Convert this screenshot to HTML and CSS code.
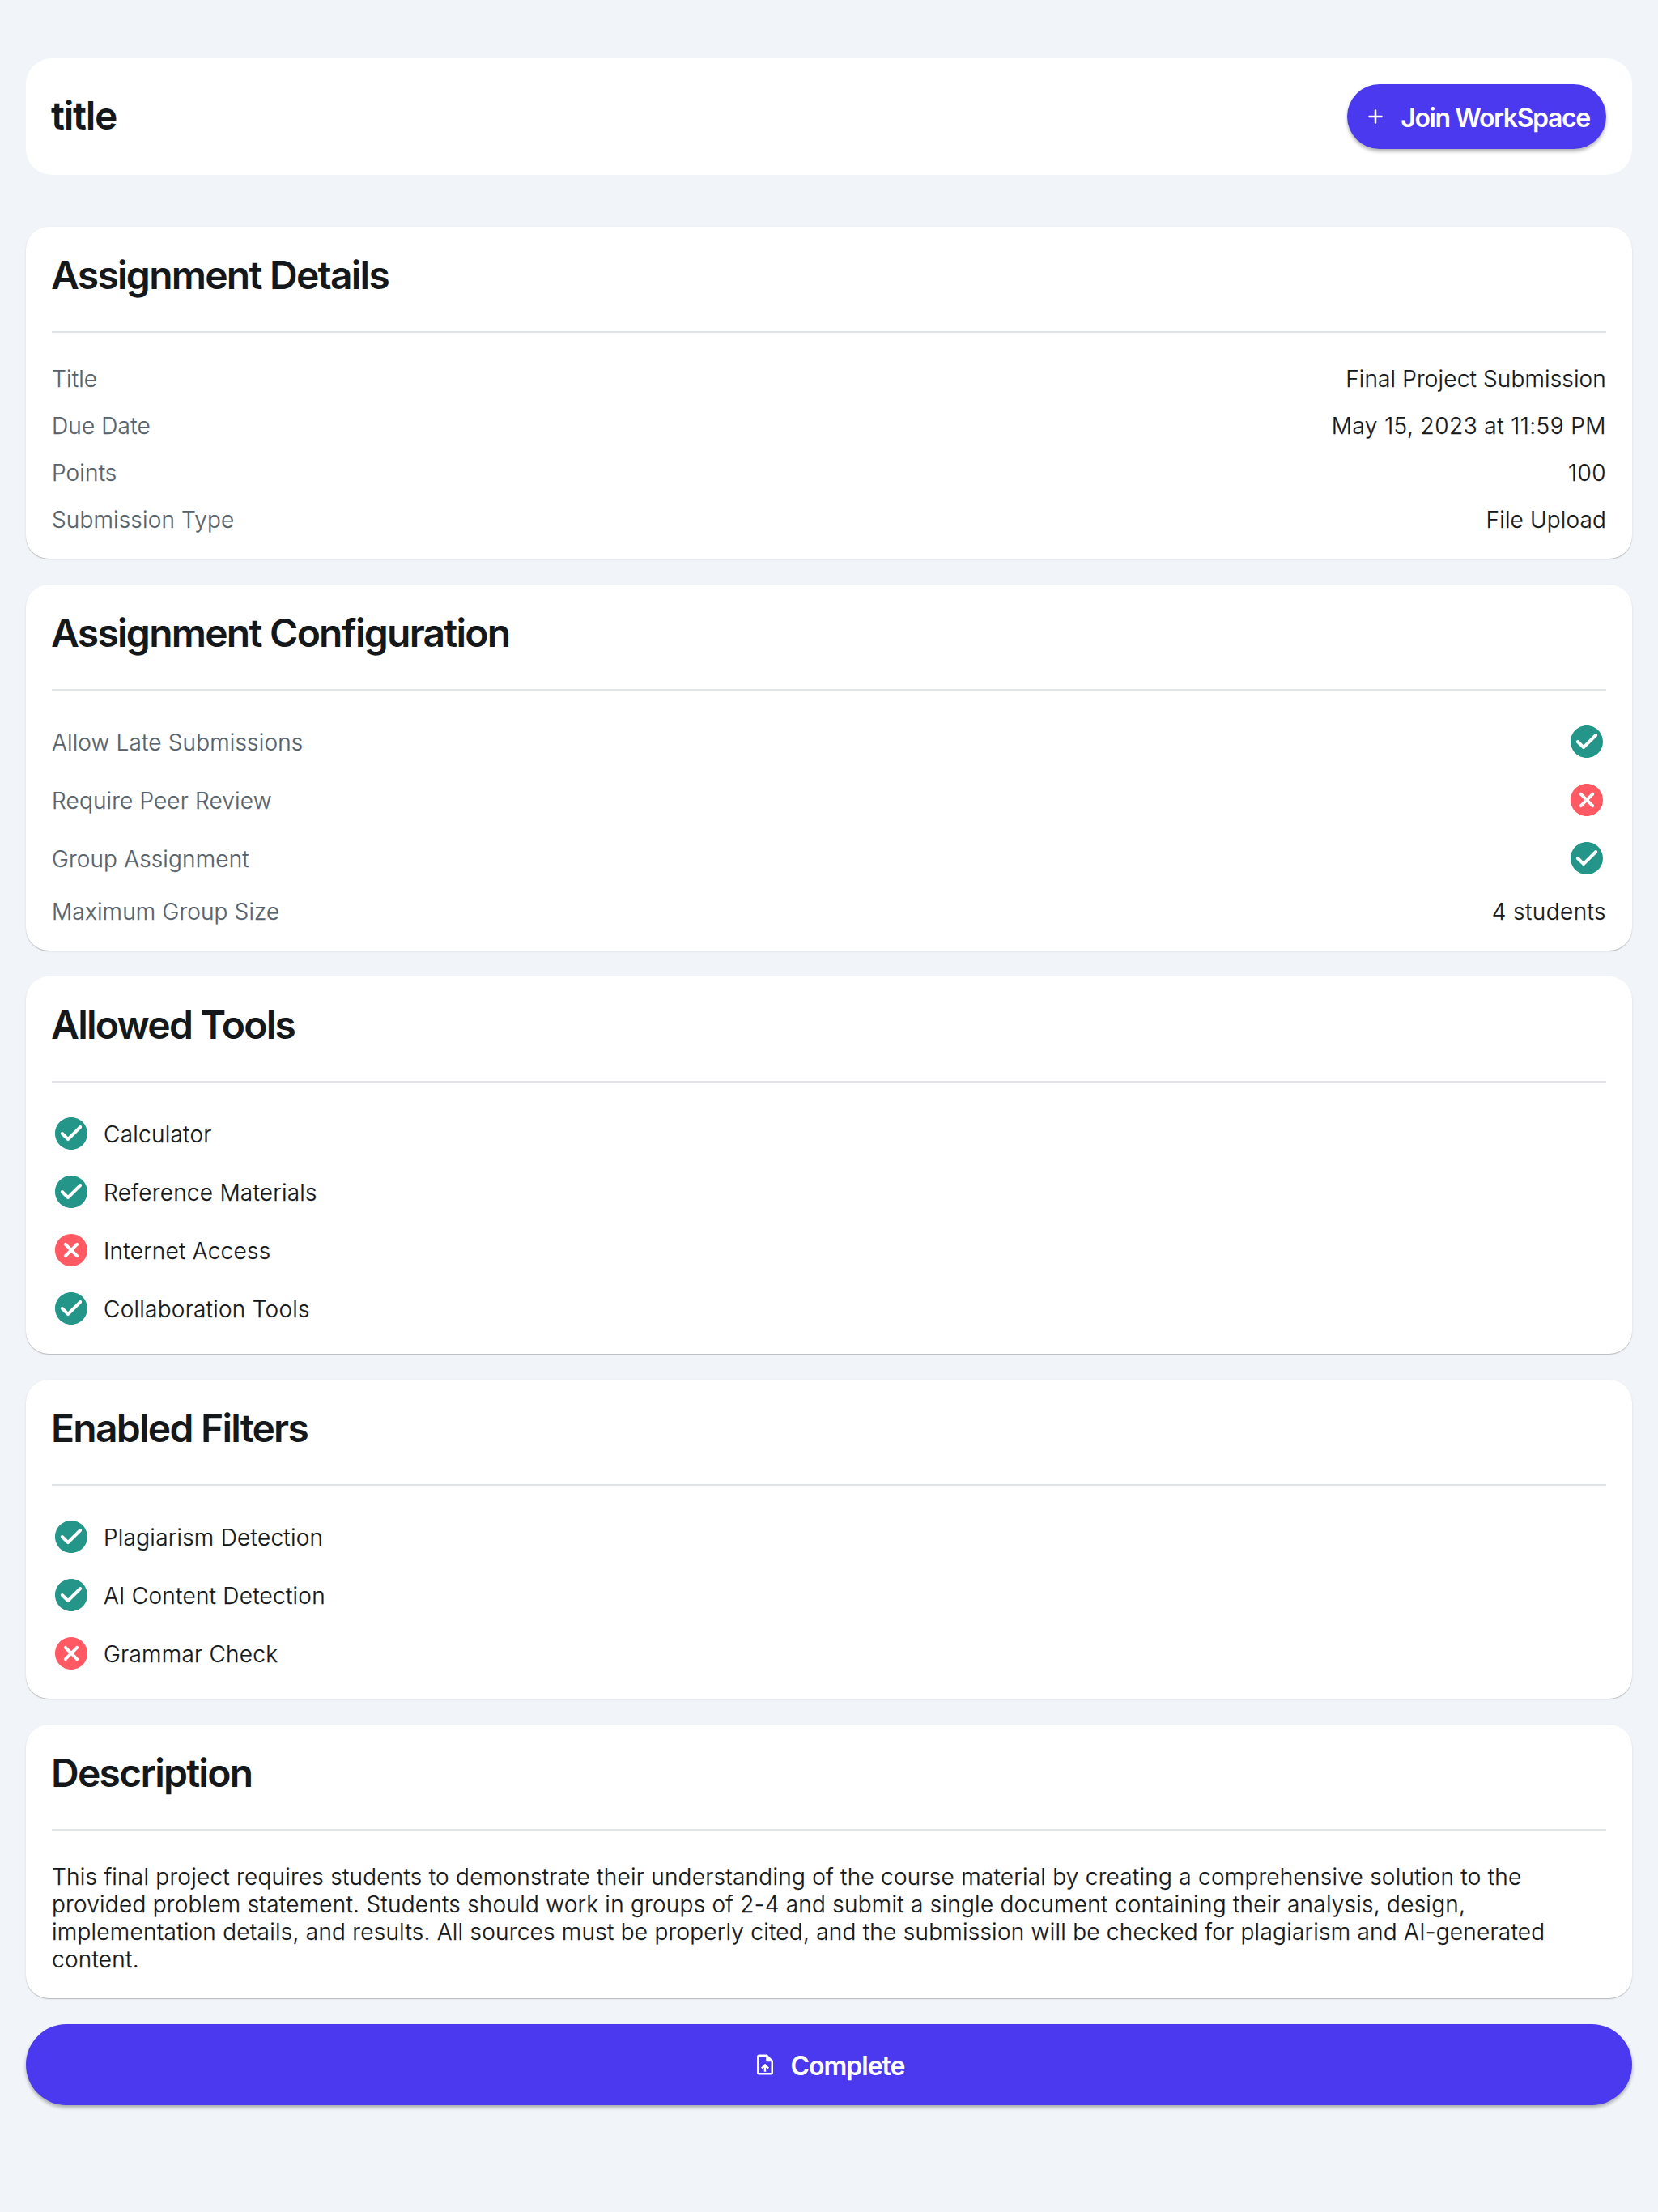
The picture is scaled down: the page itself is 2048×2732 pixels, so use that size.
FILE: index.html
```html
<!DOCTYPE html>
<html lang="en">
<head>
<meta charset="utf-8">
<title>Assignment</title>
<link rel="stylesheet" href="styles.css">
</head>
<body>
<svg class="sprite" aria-hidden="true">
  <symbol id="check" viewBox="0 0 24 24"><path d="M12 2C6.48 2 2 6.48 2 12s4.48 10 10 10 10-4.48 10-10S17.52 2 12 2zM9.29 16.29 5.7 12.7c-.39-.39-.39-1.02 0-1.41.39-.39 1.02-.39 1.41 0L10 14.17l6.88-6.88c.39-.39 1.02-.39 1.41 0 .39.39.39 1.02 0 1.41l-7.59 7.59c-.38.39-1.02.39-1.41 0z"/></symbol>
  <symbol id="cancel" viewBox="0 0 24 24"><path d="M12 2C6.47 2 2 6.47 2 12s4.47 10 10 10 10-4.47 10-10S17.53 2 12 2zm4.3 14.3c-.39.39-1.02.39-1.41 0L12 13.41 9.11 16.3c-.39.39-1.02.39-1.41 0-.39-.39-.39-1.02 0-1.41L10.59 12 7.7 9.11c-.39-.39-.39-1.02 0-1.41.39-.39 1.02-.39 1.41 0L12 10.59l2.89-2.89c.39-.39 1.02-.39 1.41 0 .39.39.39 1.02 0 1.41L13.41 12l2.89 2.89c.38.38.38 1.02 0 1.41z"/></symbol>
  <symbol id="add" viewBox="0 0 24 24"><path d="M18 13h-5v5c0 .55-.45 1-1 1s-1-.45-1-1v-5H6c-.55 0-1-.45-1-1s.45-1 1-1h5V6c0-.55.45-1 1-1s1 .45 1 1v5h5c.55 0 1 .45 1 1s-.45 1-1 1z"/></symbol>
  <symbol id="upload" viewBox="0 0 24 24"><path d="M14 2H6c-1.1 0-1.99.9-1.99 2L4 20c0 1.1.89 2 1.99 2H18c1.1 0 2-.9 2-2V8l-6-6zm4 18H6V4h7v5h5v11zM8 15.01l1.41 1.41L11 14.84V19h2v-4.16l1.59 1.59L16 15.01 12.01 11 8 15.01z"/></symbol>
</svg>
<main class="page">
  <header class="header">
    <h1 class="heading title">title</h1>
    <button class="button join"><svg class="button-icon"><use href="#add"/></svg><span class="button-text">Join WorkSpace</span></button>
  </header>

  <section class="card">
    <h2 class="heading">Assignment Details</h2>
    <hr class="divider">
    <div class="row"><span class="label">Title</span><span>Final Project Submission</span></div>
    <div class="row"><span class="label">Due Date</span><span class="numeric">May 15, 2023 at 11:59 PM</span></div>
    <div class="row"><span class="label">Points</span><span class="numeric">100</span></div>
    <div class="row"><span class="label">Submission Type</span><span>File Upload</span></div>
  </section>

  <section class="card">
    <h2 class="heading">Assignment Configuration</h2>
    <hr class="divider">
    <div class="row"><span class="label">Allow Late Submissions</span><svg class="icon yes"><use href="#check"/></svg></div>
    <div class="row"><span class="label">Require Peer Review</span><svg class="icon no"><use href="#cancel"/></svg></div>
    <div class="row"><span class="label">Group Assignment</span><svg class="icon yes"><use href="#check"/></svg></div>
    <div class="row"><span class="label">Maximum Group Size</span><span class="numeric">4 students</span></div>
  </section>

  <section class="card">
    <h2 class="heading">Allowed Tools</h2>
    <hr class="divider">
    <div class="item"><svg class="icon yes"><use href="#check"/></svg><span>Calculator</span></div>
    <div class="item"><svg class="icon yes"><use href="#check"/></svg><span>Reference Materials</span></div>
    <div class="item"><svg class="icon no"><use href="#cancel"/></svg><span>Internet Access</span></div>
    <div class="item"><svg class="icon yes"><use href="#check"/></svg><span>Collaboration Tools</span></div>
  </section>

  <section class="card">
    <h2 class="heading">Enabled Filters</h2>
    <hr class="divider">
    <div class="item"><svg class="icon yes"><use href="#check"/></svg><span>Plagiarism Detection</span></div>
    <div class="item"><svg class="icon yes"><use href="#check"/></svg><span>AI Content Detection</span></div>
    <div class="item"><svg class="icon no"><use href="#cancel"/></svg><span>Grammar Check</span></div>
  </section>

  <section class="card">
    <h2 class="heading">Description</h2>
    <hr class="divider">
    <p class="text">This final project requires students to demonstrate their understanding of the course material by creating a comprehensive solution to the provided problem statement. Students should work in groups of 2-4 and submit a single document containing their analysis, design, implementation details, and results. All sources must be properly cited, and the submission will be checked for plagiarism and AI-generated content.</p>
  </section>

  <button class="button complete"><svg class="button-icon"><use href="#upload"/></svg><span class="button-text">Complete</span></button>
</main>
</body>
</html>
```
FILE: styles.css
```css
* { box-sizing: border-box; }

body {
  margin: 0;
  min-height: 2732px;
  background: #f1f4f8;
  color: #14181b;
  font: 300 28px/34px Inter, sans-serif;
  letter-spacing: 0.25px;
}

.sprite { display: none; }

.page {
  display: flex;
  flex-direction: column;
  gap: 32px;
  padding: 72px 32px 0;
}

.header {
  display: flex;
  align-items: center;
  justify-content: space-between;
  height: 144px;
  margin-bottom: 32px;
  padding: 0 32px;
  border-radius: 32px;
  background: #fff;
}

.heading {
  margin: -1px 0 1px -1px;
  font-size: 48px;
  font-weight: 600;
  line-height: 58px;
  letter-spacing: -1.75px;
}

.title { letter-spacing: -1.3px; }

.card {
  display: flex;
  flex-direction: column;
  gap: 24px;
  padding: 32px;
  border-radius: 28px;
  background: #fff;
  box-shadow: 0 1px 1px rgba(0, 0, 0, 0.2), 0 1px 3px rgba(0, 0, 0, 0.06);
}

.divider {
  width: 100%;
  height: 2px;
  margin: 15px 0;
  border: 0;
  background: #e0e3e7;
}

.row {
  display: flex;
  align-items: center;
  justify-content: space-between;
  letter-spacing: 0.15px;
}

.item {
  display: flex;
  align-items: center;
  gap: 16px;
}

.row span,
.item span,
.text {
  padding-top: 1px;
  margin-bottom: -1px;
  -webkit-text-stroke: 0.25px currentColor;
}

.label { color: #57636c; }
.numeric { letter-spacing: 0.45px; }

.icon {
  width: 48px;
  height: 48px;
}

.yes { fill: #249689; }
.no { fill: #ff5963; }

.text { margin-top: 0; }

.button {
  display: flex;
  align-items: center;
  justify-content: center;
  gap: 16px;
  padding: 0;
  border: 0;
  background: #4b39ef;
  color: #fff;
  font: 600 32px/40px Inter, sans-serif;
  letter-spacing: -1px;
  box-shadow: 0 3px 4px rgba(0, 0, 0, 0.3);
}

.button-text { padding-top: 3px; }

.button-icon {
  width: 30px;
  height: 30px;
  fill: #fff;
}

.join {
  width: 320px;
  height: 80px;
  border-radius: 40px;
  letter-spacing: -1.4px;
}

.complete {
  width: 100%;
  height: 100px;
  border-radius: 50px;
}
```
